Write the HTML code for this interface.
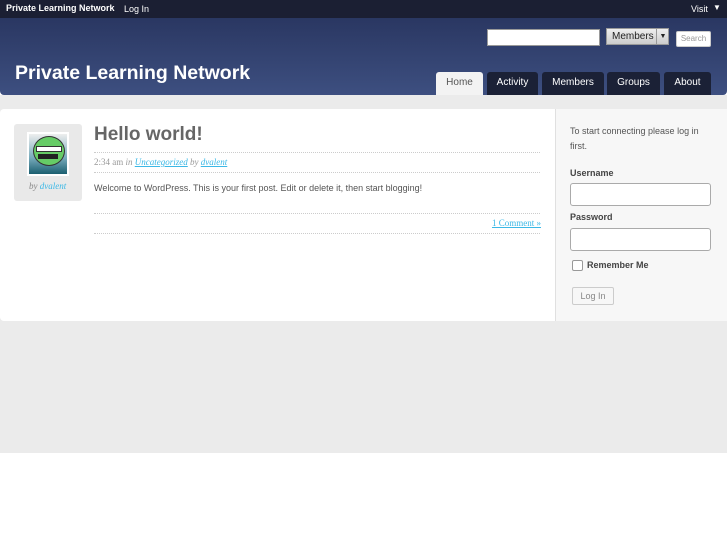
<!DOCTYPE html>
<html><head><style>
body{margin:0;width:727px;height:545px;background:#fff;font-family:"Liberation Sans",sans-serif;position:relative;overflow:hidden}
.a{position:absolute}
#top{left:0;top:0;width:727px;height:18px;background:#1b1f33;color:#fff;font-size:9px}
#hdr{left:0;top:18px;width:727px;height:77px;background:linear-gradient(#2a3762,#3d4f80);border-radius:0 0 4px 4px}
#bg{left:0;top:95px;width:727px;height:358px;background:#ebebeb}
#main{left:0;top:109px;width:727px;height:212px;background:#fff;border-radius:4px}
#side{left:555px;top:109px;width:172px;height:212px;background:#f7f7f7;border-left:1px solid #e0e0e0}
.tab{top:72px;height:23px;background:#1b2136;color:#fff;font-size:10px;text-align:center;line-height:22px;border-radius:3px 3px 0 0}
.hr{border-top:1px dotted #ccc;height:0}
.in{background:#fff;border:1px solid #aaa;border-radius:3px}
</style></head><body>
<div class="a" id="top">
<span class="a" style="left:6px;top:3px;font-weight:bold">Private Learning Network</span>
<span class="a" style="left:124px;top:4px">Log In</span>
<span class="a" style="left:691px;top:4px">Visit</span>
<span class="a" style="left:713px;top:3px;font-size:8px">▼</span>
</div>
<div class="a" id="hdr">
<div class="a" style="left:487px;top:11px;width:111px;height:15px;background:#fff;border:1px solid #999"></div>
<div class="a" style="left:606px;top:10px;width:61px;height:15px;background:linear-gradient(#eee,#ccc);border:1px solid #999;font-size:10px;line-height:15px;color:#222"><span style="padding-left:5px">Members</span><span class="a" style="left:49px;top:0;width:12px;height:15px;border-left:1px solid #999;font-size:7px;text-align:center">▼</span></div>
<div class="a" style="left:676px;top:13px;width:33px;height:14px;background:#fff;border:1px solid #ccc;border-radius:2px;font-size:8px;color:#999;text-align:center;line-height:14px">Search</div>
<div class="a" style="left:15px;top:44px;color:#fff;font-size:19.5px;font-weight:bold">Private Learning Network</div>
</div>
<div class="a tab" style="left:436px;width:47px;background:#f3f3f3;color:#555">Home</div>
<div class="a tab" style="left:487px;width:51px">Activity</div>
<div class="a tab" style="left:542px;width:62px">Members</div>
<div class="a tab" style="left:607px;width:53px">Groups</div>
<div class="a tab" style="left:664px;width:47px">About</div>
<div class="a" id="bg"></div>
<div class="a" id="main"></div>
<div class="a" id="side"></div>
<div class="a" style="left:14px;top:124px;width:68px;height:77px;background:#e9e9e9;border-radius:3px"></div>
<div class="a" style="left:27px;top:132px;width:42px;height:44px;background:#fff"></div>
<div class="a" style="left:29px;top:134px;width:38px;height:40px;background:linear-gradient(#eee,#7ab 60%,#1b5f70)"></div>
<div class="a" style="left:33px;top:136px;width:30px;height:28px;border-radius:50%;background:#6c6;border:1px solid #333"></div>
<div class="a" style="left:36px;top:146px;width:24px;height:4px;background:#fff;border:1px solid #333"></div>
<div class="a" style="left:38px;top:154px;width:20px;height:5px;background:#222"></div>
<div class="a" style="left:29px;top:181px;font-family:'Liberation Serif',serif;font-style:italic;font-size:9px;color:#888">by <span style="color:#3bb8e6">dvalent</span></div>
<div class="a" style="left:94px;top:124px;font-size:19px;font-weight:bold;color:#666">Hello world!</div>
<div class="a hr" style="left:94px;top:152px;width:446px"></div>
<div class="a" style="left:94px;top:157px;font-family:'Liberation Serif',serif;font-size:9px;color:#999">2:34 am <i>in</i> <u style="color:#3bb8e6;font-style:italic">Uncategorized</u> <i>by</i> <u style="color:#3bb8e6;font-style:italic">dvalent</u></div>
<div class="a hr" style="left:94px;top:172px;width:446px"></div>
<div class="a" style="left:94px;top:183px;font-size:9px;color:#555">Welcome to WordPress. This is your first post. Edit or delete it, then start blogging!</div>
<div class="a hr" style="left:94px;top:213px;width:446px"></div>
<div class="a" style="left:492px;top:218px;font-family:'Liberation Serif',serif;font-size:9px;color:#3bb8e6;text-decoration:underline">1 Comment »</div>
<div class="a hr" style="left:94px;top:233px;width:446px"></div>
<div class="a" style="left:570px;top:124px;width:145px;font-size:9px;color:#555;line-height:15px">To start connecting please log in first.</div>
<div class="a" style="left:570px;top:168px;font-size:9px;font-weight:bold;color:#444">Username</div>
<div class="a in" style="left:570px;top:183px;width:139px;height:21px"></div>
<div class="a" style="left:570px;top:212px;font-size:9px;font-weight:bold;color:#444">Password</div>
<div class="a in" style="left:570px;top:228px;width:139px;height:21px"></div>
<div class="a" style="left:572px;top:260px;width:9px;height:9px;border:1px solid #999;border-radius:2px;background:#fff"></div>
<div class="a" style="left:587px;top:260px;font-size:9px;font-weight:bold;color:#444">Remember Me</div>
<div class="a" style="left:572px;top:287px;width:40px;height:16px;border:1px solid #ccc;border-radius:2px;background:#f7f7f7;font-size:9px;color:#888;text-align:center;line-height:16px">Log In</div>
</body></html>
